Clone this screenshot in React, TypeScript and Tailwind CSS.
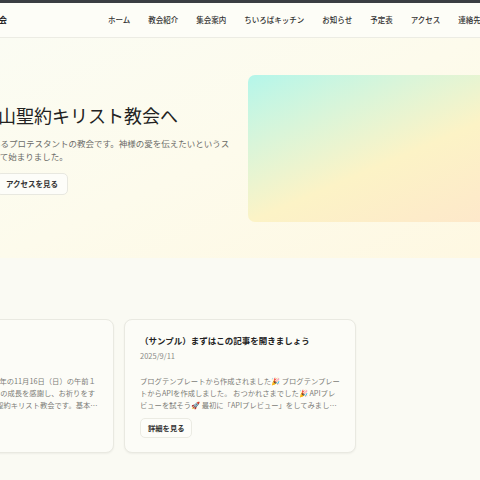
import React from 'react';

const navItems = ['ホーム', '教会紹介', '集会案内', 'ちいろばキッチン', 'お知らせ', '予定表', 'アクセス', '連絡先'];

interface Post {
  title: string;
  date: string;
  excerpt: string;
}

const posts: Post[] = [
  {
    title: '収穫感謝礼拝のお知らせ',
    date: '2025/10/20',
    excerpt:
      '収穫感謝礼拝のご案内です。今年の11月16日（日）の午前１０時から、一年間の恵みと教会の成長を感謝し、お祈りをする時です。会場2階、主催東山聖約キリスト教会です。基本的にどなたでもご参加いただけます。',
  },
  {
    title: '（サンプル）まずはこの記事を開きましょう',
    date: '2025/9/11',
    excerpt:
      'ブログテンプレートから作成されました🎉 ブログテンプレートからAPIを作成しました。 おつかれさまでした🎉 APIプレビューを試そう🚀 最初に「APIプレビュー」をしてみましょう。',
  },
];

const nextPosts: Post[] = [
  { title: '礼拝のご案内', date: '2025/9/1', excerpt: '毎週日曜日の午前１０時半から礼拝を行っています。' },
  { title: 'ちいろばキッチン', date: '2025/8/20', excerpt: '地域の皆さまと一緒に食事を楽しむ時間です。' },
  { title: '夏のキャンプ', date: '2025/8/1', excerpt: '今年も夏のキャンプを行いました。' },
];

function PostCard({ post }: { post: Post }) {
  return (
    <div className="rounded-[8px] border border-[#e9e9e1] bg-[#fcfcf7] px-[15px] pt-[14px] pb-[14px] shadow-[0_1px_2px_rgba(0,0,0,0.05)]">
      <h3 className="text-[8.5px] leading-[13px] font-bold text-[#222]">{post.title}</h3>
      <p className="mt-[3px] text-[7.5px] leading-[12px] text-[#8a8a86]">{post.date}</p>
      <p className="mt-[13px] text-[7.3px] leading-[12px] text-[#7c7c78] line-clamp-3">{post.excerpt}</p>
      <button className="mt-[7px] h-[20px] px-[7px] rounded-[5px] border border-[#ebebe3] bg-[#fdfdf9] text-[7.3px] font-bold text-[#333]">
        詳細を見る
      </button>
    </div>
  );
}

export default function App() {
  return (
    <div className="h-screen w-full overflow-hidden bg-[#fafaf3] font-['Noto_Sans_CJK_JP','Noto_Sans',sans-serif]">
      <div className="h-[3px] bg-[#3b3e43]" />
      <header className="h-[35px] border-b border-[#ececE4] bg-[#fdfdf7]">
        <div className="-ml-[118px] flex h-full w-[716px] items-center pl-[45px]">
          <span className="text-[8px] font-semibold text-[#222]">東山聖約キリスト教会</span>
          <nav className="ml-[101px] flex shrink-0 gap-[18px] whitespace-nowrap">
            {navItems.map((item) => (
              <a key={item} className="text-[7.5px] font-medium text-[#333]">
                {item}
              </a>
            ))}
          </nav>
        </div>
      </header>

      <section className="bg-linear-to-br from-[#fbfcf3] via-[#fdfbec] to-[#fef8e2]">
        <div className="-ml-[118px] grid w-[716px] grid-cols-2 items-center gap-[16px] px-[8px] pt-[37px] pb-[36px]">
          <div>
            <h1 className="text-[18px] leading-[24px] font-normal text-[#222] whitespace-nowrap">
              ようこそ、東山聖約キリスト教会へ
            </h1>
            <p className="mt-[10px] text-[8.5px] leading-[13px] text-[#6b6b68] whitespace-nowrap">
              東京都日野市の東山の丘にあるプロテスタントの教会です。神様の愛を伝えたいというス
              <br />
              ピリットを受けた人々によって始まりました。
            </p>
            <div className="mt-[10px] flex gap-[8px]">
              <button className="h-[22px] w-[98px] rounded-[5px] bg-[#333] text-[7.5px] font-semibold text-white">
                礼拝・集会のご案内
              </button>
              <button className="h-[22px] rounded-[5px] border border-[#e8e8e0] bg-[#fdfdf9] px-[9px] text-[7.5px] font-semibold text-[#333]">
                アクセスを見る
              </button>
            </div>
          </div>
          <div className="h-[147px] rounded-[7px] bg-linear-to-br from-[#b4f6ea] via-[#fcf3c6] to-[#fee3cc]" />
        </div>
      </section>

      <section className="-ml-[118px] w-[716px] pt-[22px]">
        <div className="mb-[15px] flex h-[24px] items-center justify-between">
          <h2 className="text-[14px] font-bold text-[#222]">お知らせ</h2>
          <a className="text-[7.5px] text-[#555]">すべて見る</a>
        </div>
        <div className="grid grid-cols-3 gap-x-[10px]">
          {posts.map((p) => (
            <PostCard key={p.title} post={p} />
          ))}
        </div>
        <div className="mt-[27px] grid grid-cols-3 gap-x-[10px]">
          {nextPosts.map((p) => (
            <PostCard key={p.title} post={p} />
          ))}
        </div>
      </section>
    </div>
  );
}
